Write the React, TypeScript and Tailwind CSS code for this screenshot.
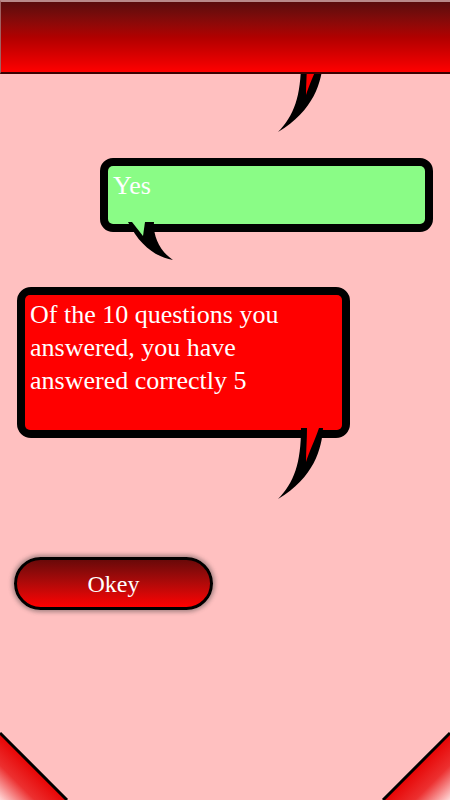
import React from 'react';

// tail of the red bubble (also used for the bubble hidden under the header)
function RedTail({ className }: { className: string }) {
  return (
    <svg className={className} width="50" height="74" viewBox="0 0 50 74">
      <path d="M25 0 L47 0 C46 20 38 50 2 71 C18 55 25 35 25 0 Z" fill="#000" />
      <path d="M31 0 L43 0 C39 12 33 24 30 34 C30 22 31 12 31 0 Z" fill="#ff0000" />
    </svg>
  );
}

function GreenTail({ className }: { className: string }) {
  return (
    <svg className={className} width="50" height="42" viewBox="0 0 50 42">
      <path d="M2 0 L28 0 C27 12 32 28 47 38 C30 35 14 24 2 0 Z" fill="#000" />
      <path d="M6 0 L19 0 L17 14 Z" fill="#8afc86" />
    </svg>
  );
}

function Corner({ side }: { side: 'left' | 'right' }) {
  const id = `corner-${side}`;
  return (
    <svg
      className={`absolute bottom-0 ${side === 'left' ? 'left-0' : 'right-0 -scale-x-100'}`}
      width="70"
      height="70"
      viewBox="0 0 70 70"
    >
      <defs>
        <linearGradient id={id} gradientUnits="userSpaceOnUse" x1="35" y1="35" x2="0" y2="70">
          <stop offset="0" stopColor="#e60000" />
          <stop offset="0.5" stopColor="#ec3030" />
          <stop offset="1" stopColor="#ffdada" />
        </linearGradient>
      </defs>
      <path d="M0 3 L67 70 L0 70 Z" fill={`url(#${id})`} />
      <path d="M0 3 L67 70" stroke="#000" strokeWidth="3" />
    </svg>
  );
}

export default function App() {
  return (
    <div className="relative h-[800px] w-[450px] overflow-hidden bg-[#ffc0c0] font-['Liberation_Serif',serif]">
      {/* bubble tail peeking out from under the header */}
      <RedTail className="absolute left-[276px] top-[61px]" />

      <header className="relative z-10 h-[74px] border-t-2 border-b-2 border-l border-t-[#b98a8a] border-b-[#3a0000] border-l-[#a06060] bg-gradient-to-b from-[#5a0c0c] via-[#b00000] to-[#ff0000]" />

      <div className="flex flex-col">
        {/* Yes bubble */}
        <div className="relative ml-[100px] mt-[84px] h-[74px] w-[333px]">
          <div className="h-full w-full rounded-[13px] border-[8px] border-black bg-black">
            <div className="h-full w-full rounded-[5px] bg-[#8afc86] px-[5px] pt-[3px] text-[26px] leading-[33px] text-white">
              Yes
            </div>
          </div>
          <GreenTail className="absolute left-[26px] top-[64px]" />
        </div>

        {/* result bubble */}
        <div className="relative ml-[17px] mt-[55px] h-[151px] w-[333px]">
          <div className="h-full w-full rounded-[14px] border-[8px] border-black bg-black">
            <div className="h-full w-full rounded-[5px] bg-[#ff0000] px-[5px] pt-[3px] text-[26px] leading-[33px] text-white">
              Of the 10 questions you
              <br />
              answered, you have
              <br />
              answered correctly 5
            </div>
          </div>
          <RedTail className="absolute left-[259px] top-[141px]" />
        </div>

        <button className="ml-[14px] mt-[119px] flex h-[53px] w-[199px] items-center justify-center rounded-full border-[3px] border-black bg-gradient-to-b from-[#6a0909] to-[#ff0000] text-[24px] text-white shadow-[0_0_4px_2px_rgba(60,60,60,0.45)]">
          Okey
        </button>
      </div>

      <Corner side="left" />
      <Corner side="right" />
    </div>
  );
}
